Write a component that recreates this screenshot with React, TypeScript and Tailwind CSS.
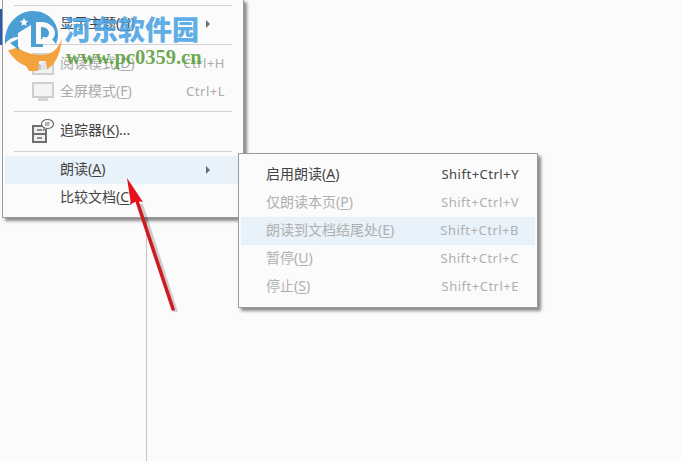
const font = { fontFamily: '"Noto Sans", "Noto Sans CJK SC", sans-serif' };

function ChevronRight() {
  return <span className="h-0 w-0 border-y-[4px] border-l-[4px] border-y-transparent border-l-[#6b6b6b]" />;
}

function Sep({ className }: { className: string }) {
  return <div className={`mx-[11px] h-px bg-[#d2d2d2] ${className}`} />;
}

function MainRow({
  label,
  hotkey,
  tail,
  shortcut,
  arrow,
  disabled,
  active,
  icon,
}: {
  label: string;
  hotkey: string;
  tail?: string;
  shortcut?: string;
  arrow?: boolean;
  disabled?: boolean;
  active?: boolean;
  icon?: React.ReactNode;
}) {
  return (
    <div
      className={`mx-[2px] flex h-[28px] items-center pr-[16px] text-[14px] ${
        active ? "bg-[#e8f2fa]" : ""
      } ${disabled ? "text-[#ababab]" : "text-[#444444]"}`}
    >
      <span className="flex w-[55px] justify-center pl-[20px]">{icon}</span>
      <span className="flex-1 whitespace-nowrap pb-[3px]">
        {label}(<span className="underline underline-offset-2">{hotkey}</span>){tail}
      </span>
      {shortcut ? <span className="text-[13px] tracking-[0.5px]">{shortcut}</span> : null}
      {arrow ? (
        <span className="mr-[15px] flex">
          <ChevronRight />
        </span>
      ) : null}
    </div>
  );
}

function SubRow({
  label,
  hotkey,
  shortcut,
  disabled,
  active,
}: {
  label: string;
  hotkey: string;
  shortcut: string;
  disabled?: boolean;
  active?: boolean;
}) {
  return (
    <div
      className={`flex h-[28px] items-center pl-[25px] pr-[16px] text-[14px] ${active ? "bg-[#e8f2fa]" : ""} ${
        disabled ? "text-[#b0b0b0]" : "text-[#444444]"
      }`}
    >
      <span className="flex-1 whitespace-nowrap pb-[3px]">
        {label}(<span className="underline underline-offset-2">{hotkey}</span>)
      </span>
      <span className="text-[13px] tracking-[0.5px]">{shortcut}</span>
    </div>
  );
}

function ReadIcon() {
  return (
    <svg width="22" height="22" viewBox="0 0 22 22">
      <rect x="1" y="1" width="20" height="20" fill="#f2f2f2" stroke="#cfcfcf" strokeWidth="2" />
      <path d="M4 17V9l5 3v5z" fill="#c4c4c4" />
      <path d="M9 12l8-8v13H9z" fill="#e4e4e4" />
    </svg>
  );
}

function ScreenIcon() {
  return (
    <svg width="22" height="20" viewBox="0 0 22 20">
      <rect x="1" y="1" width="20" height="14" fill="#f4f4f4" stroke="#cfcfcf" strokeWidth="2" />
      <rect x="6" y="16" width="10" height="3" fill="#d6d6d6" />
    </svg>
  );
}

function TrackerIcon() {
  return (
    <svg width="22" height="24" viewBox="0 0 22 24">
      <path d="M0 6h15v18H0z" fill="#6e6e6e" />
      <path d="M2 8h11v6H2zM2 16h11v6H2z" fill="#f0f0f0" />
      <path d="M5 11h5M5 19h5" stroke="#6e6e6e" strokeWidth="1.5" />
      <ellipse cx="15.5" cy="5" rx="6" ry="4.5" fill="#fafafa" stroke="#6e6e6e" strokeWidth="1.2" />
      <path d="M13 4h5M13 6h4" stroke="#6e6e6e" />
      <path d="M12.5 9l-1.5 2.5 3.5-2" fill="#fafafa" stroke="#6e6e6e" />
    </svg>
  );
}

export default function App() {
  return (
    <div className="relative h-[461px] w-[681px] overflow-hidden bg-[#fbfbfb]" style={font}>
      {/* window edge */}
      <div className="absolute left-0 top-[9px] h-[36px] w-[2px] bg-[#2a5caa]" />
      <div className="absolute bottom-0 left-[146px] top-[218px] w-px bg-[#c6c6c6]" />

      {/* main menu */}
      <div className="absolute left-[2px] top-[-1px] h-[219px] w-[242px] border border-[#9a9a9a] bg-[#fbfbfb] pt-[5px] shadow-[3px_3px_3px_rgba(0,0,0,0.45)]">
        <Sep className="mb-[4px]" />
        <MainRow label="显示主题" hotkey="H" arrow />
        <Sep className="mb-[5px] mt-[6px]" />
        <MainRow label="阅读模式" hotkey="D" shortcut="Ctrl+H" disabled icon={<ReadIcon />} />
        <MainRow label="全屏模式" hotkey="F" shortcut="Ctrl+L" disabled icon={<ScreenIcon />} />
        <Sep className="mb-[5px] mt-[5px]" />
        <MainRow label="追踪器" hotkey="K" tail="..." icon={<TrackerIcon />} />
        <Sep className="mb-[4px] mt-[6px]" />
        <MainRow label="朗读" hotkey="A" arrow active />
        <MainRow label="比较文档" hotkey="C" />
      </div>

      {/* submenu */}
      <div className="absolute left-[238px] top-[153px] w-[300px] border border-[#9a9a9a] bg-[#fbfbfb] px-[2px] pb-[6px] pt-[7px] shadow-[3px_3px_3px_rgba(0,0,0,0.45)]">
        <SubRow label="启用朗读" hotkey="A" shortcut="Shift+Ctrl+Y" />
        <SubRow label="仅朗读本页" hotkey="P" shortcut="Shift+Ctrl+V" disabled />
        <SubRow label="朗读到文档结尾处" hotkey="E" shortcut="Shift+Ctrl+B" disabled active />
        <SubRow label="暂停" hotkey="U" shortcut="Shift+Ctrl+C" disabled />
        <SubRow label="停止" hotkey="S" shortcut="Shift+Ctrl+E" disabled />
      </div>

      {/* red arrow annotation */}
      <svg className="absolute left-[120px] top-[175px]" width="65" height="145" viewBox="0 0 65 145">
        <path d="M54 136L19 28" stroke="rgba(0,0,0,0.18)" strokeWidth="4" transform="translate(2 1)" />
        <path d="M53 134L17 26" stroke="#d01a20" strokeWidth="3.5" strokeLinecap="round" />
        <path d="M7 3l4 26 6-3 6 1z" fill="#e8101a" />
      </svg>

      {/* watermark */}
      <svg className="absolute left-[5px] top-[11px]" width="58" height="60" viewBox="0 0 58 60">
        <path d="M0 27C2 10 15 0 28 0c15 0 25 11 25 24 0 3-1 6-2 9-3-5-8-7-14-7H12C7 26 3 29 0 33z" fill="#4b9fd5" />
        <path d="M12 36c-3 2-6 3-9 3 4 8 12 14 18 16l3 5h9l1-10h7l1 8c8-4 13-14 15-30-3 7-7 13-14 15-8 2-21 1-31-7z" fill="#f4a23e" />
        <path d="M5 32l12-6 20-14 1 24H23v-8l-9 3v8z" fill="#4b9fd5" />
        <path d="M13 22l13-8v22H13z" fill="#fbfbfb" />
        <path d="M31 11h5c9 0 14 6 14 11s-5 11-14 11h-5zm5 5v12c4 0 8-2 8-6s-4-6-8-6z" fill="#fbfbfb" />
        <path d="M19 7l1.2 2.5 2.8.4-2 2 .5 2.8-2.500-1.300-2.500 1.300.5-2.800-2-2 2.800-.4z" fill="#fbfbfb" />
      </svg>
      <div
        className="absolute left-[64px] top-[9px] whitespace-nowrap text-[27px] font-black leading-[40px] text-[#4aa3e2]/90"
        style={{ fontFamily: '"Noto Sans CJK SC", sans-serif' }}
      >
        河东软件园
      </div>
      <div
        className="absolute left-[66px] top-[45px] whitespace-nowrap text-[20.500px] font-bold leading-[24px] text-[#5a9e3c]/90"
        style={{ fontFamily: '"Liberation Serif", serif' }}
      >
        www.pc0359.cn
      </div>
    </div>
  );
}
